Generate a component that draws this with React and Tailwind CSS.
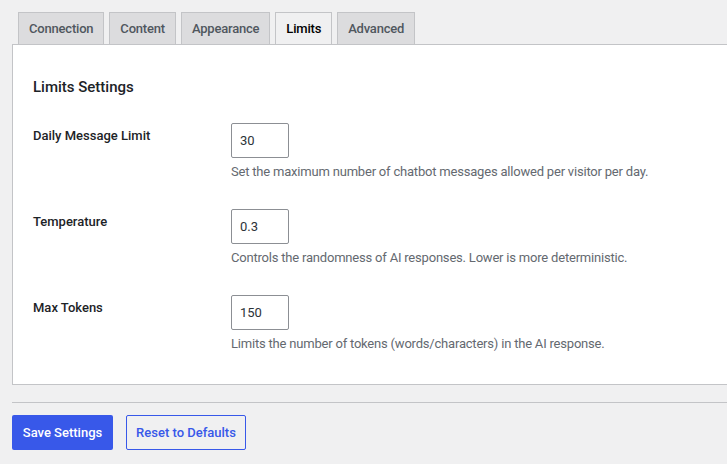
const tabs = ['Connection', 'Content', 'Appearance', 'Limits', 'Advanced'];

const fields = [
    { label: 'Daily Message Limit', value: '30', help: 'Set the maximum number of chatbot messages allowed per visitor per day.' },
    { label: 'Temperature', value: '0.3', help: 'Controls the randomness of AI responses. Lower is more deterministic.' },
    { label: 'Max Tokens', value: '150', help: 'Limits the number of tokens (words/characters) in the AI response.' },
];

export default function App() {
    return (
        <div
            className="min-h-[464px] w-[727px] overflow-hidden bg-[#f0f0f1] text-[13px] text-[#1d2327]"
            style={{ fontFamily: 'Roboto, "Noto Sans", sans-serif' }}
        >
            {/* Tab strip */}
            <div className="flex gap-[5px] pl-[18px] pt-3">
                {tabs.map((t) => {
                    const active = t === 'Limits';
                    return (
                        <div
                            key={t}
                            className={
                                active
                                    ? 'flex h-8 items-center border border-b-0 border-[#c3c4c7] bg-[#f0f0f1] px-2.5 font-medium tracking-[-0.2px] text-[#000]'
                                    : 'flex h-8 items-center border border-b-0 border-[#c3c4c7] bg-[#dcdcde] px-2.5 font-medium tracking-[-0.2px] text-[#50575e]'
                            }
                        >
                            {t}
                        </div>
                    );
                })}
            </div>

            {/* Settings panel */}
            <div className="ml-3 border border-r-0 border-[#c3c4c7] bg-white pl-5 pb-[30px] pt-[32px]">
                <h2 className="text-[15px] font-medium leading-5 text-[#1d2327]">Limits Settings</h2>

                <div className="mt-[26px] flex flex-col gap-[27px]">
                    {fields.map((f) => (
                        <div key={f.label} className="flex">
                            <div className="w-[198px] pt-[3px] font-medium leading-5">{f.label}</div>
                            <div className="flex flex-col">
                                <input
                                    readOnly
                                    value={f.value}
                                    className="h-[35px] w-[58px] rounded-[2px] border border-[#8c8f94] bg-white px-2 text-[13px] text-[#2c3338] outline-none"
                                />
                                <p className="mt-[4px] leading-5 tracking-[-0.2px] text-[#646970]">{f.help}</p>
                            </div>
                        </div>
                    ))}
                </div>
            </div>

            <div className="ml-3 mt-[17px] border-t border-[#c3c4c7]" />

            {/* Actions */}
            <div className="ml-3 mt-3 flex gap-[13px]">
                <button className="h-[35px] w-[101px] rounded-[2px] bg-[#3858e9] font-medium text-white">Save Settings</button>
                <button className="h-[35px] w-[120px] rounded-[2px] border border-[#3858e9] font-medium text-[#3858e9]">
                    Reset to Defaults
                </button>
            </div>
        </div>
    );
}
